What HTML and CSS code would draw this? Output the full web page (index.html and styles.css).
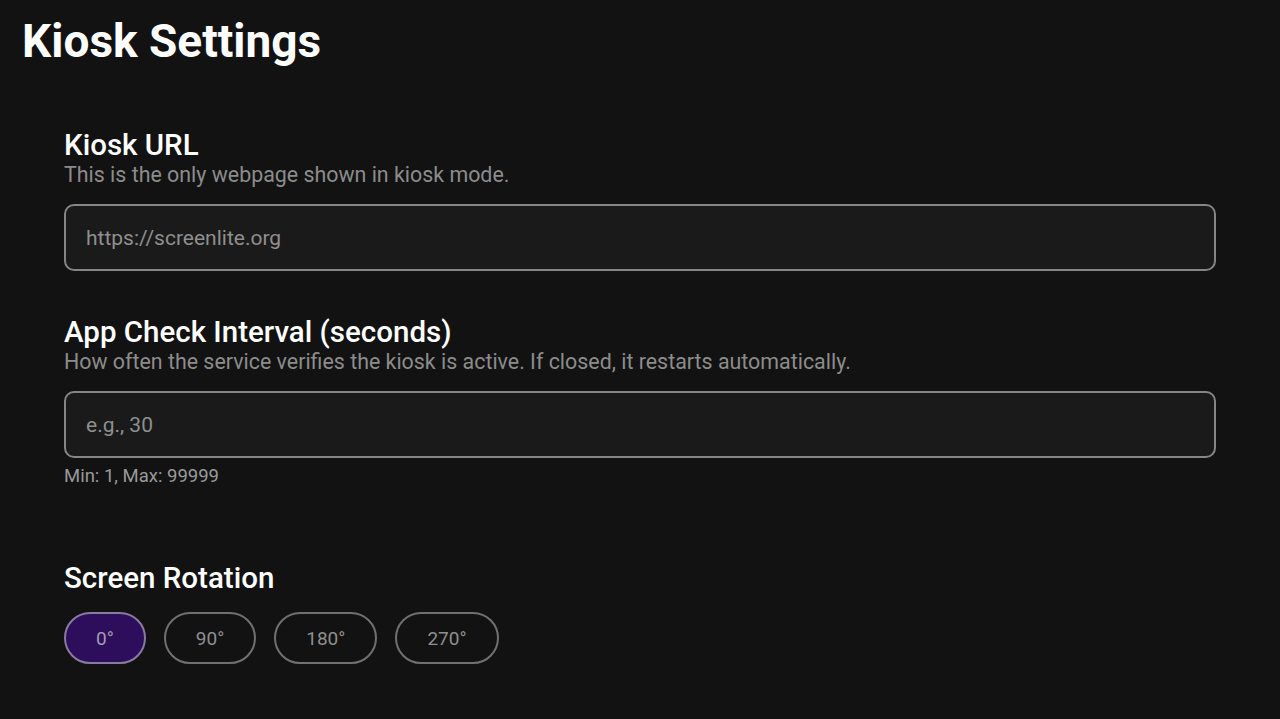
FILE: index.html
```html
<!DOCTYPE html>
<html>
<head>
<meta charset="utf-8">
<link rel="stylesheet" href="styles.css">
</head>
<body>
<main class="page">
  <h1 class="title">Kiosk Settings</h1>
  <section class="settings">
    <div class="field">
      <h2 class="label">Kiosk URL</h2>
      <p class="desc">This is the only webpage shown in kiosk mode.</p>
      <div class="input"><span class="placeholder">https://screenlite.org</span></div>
    </div>
    <div class="field">
      <h2 class="label">App Check Interval (seconds)</h2>
      <p class="desc">How often the service verifies the kiosk is active. If closed, it restarts automatically.</p>
      <div class="input"><span class="placeholder">e.g., 30</span></div>
      <p class="hint">Min: 1, Max: 99999</p>
    </div>
    <div class="field rotation">
      <h2 class="label">Screen Rotation</h2>
      <div class="chips">
        <button class="chip selected">0°</button>
        <button class="chip">90°</button>
        <button class="chip">180°</button>
        <button class="chip">270°</button>
      </div>
    </div>
  </section>
</main>
</body>
</html>
```
FILE: styles.css
```css
html, body {
  margin: 0;
  padding: 0;
  background: #121212;
  height: 100%;
  overflow: hidden;
}
body {
  font-family: Roboto, "Liberation Sans", sans-serif;
  color: #fff;
}
.page {
  padding: 13px 64px 0 22px;
}
.title {
  margin: 0;
  font-size: 46px;
  font-weight: 700;
  line-height: 56px;
  color: #fff;
}
.settings {
  padding: 59px 0 0 42px;
  display: flex;
  flex-direction: column;
}
.field {
  display: flex;
  flex-direction: column;
}
.label {
  margin: 0;
  font-size: 29.5px;
  font-weight: 500;
  line-height: 34px;
  color: #fff;
}
.desc {
  margin: 0;
  font-size: 21.4px;
  line-height: 26px;
  color: #8c8c8c;
}
.input {
  margin-top: 16px;
  height: 67px;
  box-sizing: border-box;
  border: 2px solid #858585;
  border-radius: 10px;
  background: #1a1a1a;
  display: flex;
  align-items: center;
  padding: 0 20px;
}
.placeholder {
  font-size: 21px;
  color: #8f8f8f;
}
.field + .field {
  margin-top: 44px;
}
.hint {
  margin: 7px 0 0;
  font-size: 18.5px;
  line-height: 22px;
  color: #9a9a9a;
}
.field.rotation {
  margin-top: 74px;
}
.chips {
  display: flex;
  gap: 18px;
  margin-top: 17px;
}
.chip {
  height: 52px;
  box-sizing: border-box;
  border: 2px solid #707070;
  border-radius: 26px;
  background: transparent;
  color: #8f8f8f;
  font-family: Roboto, "Liberation Sans", sans-serif;
  font-size: 19px;
  padding: 0 30px;
}
.chip.selected {
  background: #2c0e5c;
  border-color: #8a7a9e;
  color: #a49cb0;
}
```
